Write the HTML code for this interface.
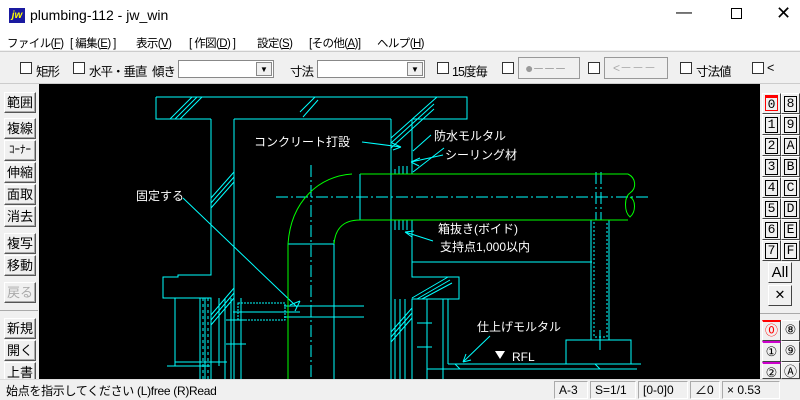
<!DOCTYPE html>
<html><head><meta charset="utf-8"><style>
*{margin:0;padding:0;box-sizing:border-box}
body{width:800px;height:400px;overflow:hidden;background:#f0f0f0;font-family:"Liberation Sans","Noto Sans CJK JP",sans-serif;font-size:12px;color:#000;position:relative}
.a{position:absolute;white-space:nowrap}
.m{font-size:11.5px;letter-spacing:-0.6px}
.t{font-size:12.5px;letter-spacing:-1px}
.cb{position:absolute;width:12px;height:12px;border:1px solid #333;background:#fff}
.btn{position:absolute;left:4px;width:32px;height:21px;background:#f0f0f0;border:1px solid;border-color:#fff #555 #555 #fff;box-shadow:inset -1px -1px #aaa;font-size:13px;text-align:center;line-height:19px}
.lb{position:absolute;width:19px;height:21px;background:#f0f0f0;border:1px solid;border-color:#fff #444 #444 #fff;font-family:"Liberation Mono",monospace;font-size:13px;text-align:center;line-height:19px}
.lb i{display:inline-block;border:1px solid #000;width:13px;height:16px;line-height:14px;font-style:normal;margin-top:1px}
.sb{position:absolute;top:381px;height:18px;border:1px solid;border-color:#aaa #fff #fff #aaa;line-height:16px;padding-left:4px;font-size:12px}
</style></head><body>
<div class="a" style="left:0;top:0;width:800px;height:31px;background:#fff"></div>
<div class="a" style="left:9px;top:8px;width:16px;height:15px;background:#1a1aa0;color:#ff0;font:bold italic 10px 'Liberation Sans';line-height:15px;text-align:center">jw</div>
<div class="a" style="left:30px;top:7px;font-size:14px">plumbing-112 - jw_win</div>
<div class="a" style="left:676px;top:4px;font-size:16px">&#8212;</div>
<div class="a" style="left:731px;top:8px;width:11px;height:11px;border:1px solid #000"></div>
<div class="a" style="left:776px;top:3px;font-size:18px">&#10005;</div>
<div class="a" style="left:0;top:31px;width:800px;height:19px;background:#fff"></div>
<div class="a m" style="left:7px;top:35px">ファイル(<u>F</u>)</div>
<div class="a m" style="left:70px;top:35px">[ 編集(<u>E</u>) ]</div>
<div class="a m" style="left:136px;top:35px">表示(<u>V</u>)</div>
<div class="a m" style="left:189px;top:35px">[ 作図(<u>D</u>) ]</div>
<div class="a m" style="left:257px;top:35px">設定(<u>S</u>)</div>
<div class="a m" style="left:309px;top:35px">[その他(<u>A</u>)]</div>
<div class="a m" style="left:377px;top:35px">ヘルプ(<u>H</u>)</div>
<div class="a" style="left:0;top:51px;width:800px;height:1px;background:#ccc"></div>
<div class="cb" style="left:20px;top:62px"></div><div class="a t" style="left:36px;top:61px">矩形</div>
<div class="cb" style="left:73px;top:62px"></div><div class="a t" style="left:89px;top:61px">水平・垂直</div>
<div class="a t" style="left:152px;top:61px">傾き</div>
<div class="a" style="left:178px;top:60px;width:96px;height:18px;background:#fff;border:1px solid #888"></div>
<div class="a" style="left:256px;top:62px;width:16px;height:14px;border:1px solid #888;background:#f0f0f0;font-size:8px;text-align:center;line-height:13px">▼</div>
<div class="a t" style="left:290px;top:61px">寸法</div>
<div class="a" style="left:317px;top:60px;width:108px;height:18px;background:#fff;border:1px solid #888"></div>
<div class="a" style="left:407px;top:62px;width:16px;height:14px;border:1px solid #888;background:#f0f0f0;font-size:8px;text-align:center;line-height:13px">▼</div>
<div class="cb" style="left:437px;top:62px"></div><div class="a t" style="left:452px;top:61px">15度毎</div>
<div class="cb" style="left:502px;top:62px"></div>
<div class="a" style="left:518px;top:57px;width:62px;height:22px;border:1px solid #999;color:#999;font-size:12px;line-height:20px;padding-left:6px;letter-spacing:-1px"><span style="font-size:14px">●</span>－－－</div>
<div class="cb" style="left:588px;top:62px"></div>
<div class="a" style="left:604px;top:57px;width:64px;height:22px;border:1px solid #999;color:#aaa;font-size:12px;line-height:20px;padding-left:8px">&lt;－－－</div>
<div class="cb" style="left:680px;top:62px"></div><div class="a t" style="left:696px;top:61px">寸法値</div>
<div class="cb" style="left:752px;top:62px"></div><div class="a t" style="left:767px;top:61px">&lt;</div>
<div class="a" style="left:0;top:83px;width:800px;height:1px;background:#ccc"></div>

<div class="btn" style="top:92px">範囲</div>
<div class="btn" style="top:118px">複線</div>
<div class="btn" style="top:140px;font-size:11px">ｺｰﾅｰ</div>
<div class="btn" style="top:162px">伸縮</div>
<div class="btn" style="top:184px">面取</div>
<div class="btn" style="top:206px">消去</div>
<div class="btn" style="top:233px">複写</div>
<div class="btn" style="top:255px">移動</div>
<div class="btn" style="top:282px;color:#aaa">戻る</div>
<div class="a" style="left:0;top:310px;width:38px;height:1px;background:#aaa"></div>
<div class="btn" style="top:318px">新規</div>
<div class="btn" style="top:340px">開く</div>
<div class="btn" style="top:362px">上書</div>

<svg class="a" style="left:39px;top:84px" width="721" height="295" viewBox="39 84 721 295">
<rect x="39" y="84" width="721" height="295" fill="#000"/>
<g stroke="#0ff" stroke-width="1" fill="none" shape-rendering="crispEdges">
<path d="M156 97H467V119H412M391 119H234M211 119H156V97"/>
<path d="M211 119V275H178V277H163V298H211V379M234 119V379"/>
<path d="M391 119V379M412 119V174M412 220V277H459V299H412V379M427 299V379M443 299V379M448 299V364"/>
<path d="M412 262H592M591 220V340M609 220V340M566 340H631V364H566ZM448 364H641M427 369H637M600 330V350"/>
<path d="M360 174V220M288 244H334M334 240V379M288 244V379"/>
<path d="M175 298V366M175 298h10M175 362h52M167 366h43M219 298V366M225 298V379M226 320h20M226 344h20M241 298V379M231 298V379"/>
<path d="M395 299V379M400 299V379M405 299V379M417 323h15M417 347h15"/>
<path d="M200 298V379M205 298V379"/>
<path d="M238 303H285V320H238Z" stroke-dasharray="2 1"/>
<path d="M233 312H300M284 306h80M284 317h80" />
<path d="M594 222V337H607V222" stroke-dasharray="2 2"/>
<path d="M311 165V379M276 197H651M596 172V220M601 172V220" stroke-dasharray="12 3 2 3"/>
</g>
<g stroke="#0ff" stroke-width="1" fill="none">
<path d="M170 119L192 97M175 119L197 97M180 119L202 97M211 198L234 172M211 203L234 177M211 208L234 182M211 315L234 288M211 320L234 293M211 325L234 298M300 112L315 97M303 117L318 100M391 138L437 97M391 143L434 104M391 148L434 109M412 298L448 277M417 299L450 280M422 299L452 283M391 332L412 308M391 337L412 313M391 342L412 318M455 364L460 369M595 364L600 369"/>
<path d="M203 298V379M208 298V379" stroke-dasharray="3 3"/>
<path d="M395 169V174M399 166V174M403 166V174M407 166V174M395 220V230M399 220V230M403 220V230M407 220V230"/>
<path d="M183 198L297 307M300 301L290 305M300 301L295 311"/>
<path d="M362 142L401 147M401 147L392 143M401 147L393 150"/>
<path d="M413 172L444 148M413 151L431 135M411 162L443 155M411 162L420 158M411 162L419 166"/>
<path d="M405 232L433 241M405 232L414 231M405 232L412 237"/>
<path d="M463 362L490 336M463 362L466 354M463 362L471 360"/>
</g>
<g stroke="#0f0" stroke-width="1" fill="none">
<path d="M360 174H628M360 220H628M352 174C320 176 291 200 288 244V379M360 220C340 220 335 232 334 244"/>
<path d="M628 174C636 178 637 188 630 193C624 197 624 212 630 217C636 212 636 200 630 197"/>
</g>
<path d="M495 351h10l-5 8z" fill="#fff"/>
<g fill="#fff" font-size="12" font-family="Liberation Sans,Noto Sans CJK JP,sans-serif">
<text x="254" y="146">コンクリート打設</text>
<text x="434" y="140">防水モルタル</text>
<text x="445" y="159">シーリング材</text>
<text x="136" y="200">固定する</text>
<text x="438" y="233">箱抜き(ボイド)</text>
<text x="440" y="251">支持点1,000以内</text>
<text x="477" y="331">仕上げモルタル</text>
<text x="512" y="361">RFL</text>
</g>
</svg>

<div class="a" style="left:760px;top:84px;width:40px;height:295px;background:#f0f0f0"></div>
<div class="lb" style="left:762px;top:93px"><i style="border-color:#f00;border-top:3px solid #f00">0</i></div><div class="lb" style="left:781px;top:93px"><i>8</i></div>
<div class="lb" style="left:762px;top:114px"><i>1</i></div><div class="lb" style="left:781px;top:114px"><i>9</i></div>
<div class="lb" style="left:762px;top:135px"><i>2</i></div><div class="lb" style="left:781px;top:135px"><i>A</i></div>
<div class="lb" style="left:762px;top:156px"><i>3</i></div><div class="lb" style="left:781px;top:156px"><i>B</i></div>
<div class="lb" style="left:762px;top:177px"><i>4</i></div><div class="lb" style="left:781px;top:177px"><i>C</i></div>
<div class="lb" style="left:762px;top:198px"><i>5</i></div><div class="lb" style="left:781px;top:198px"><i>D</i></div>
<div class="lb" style="left:762px;top:219px"><i>6</i></div><div class="lb" style="left:781px;top:219px"><i>E</i></div>
<div class="lb" style="left:762px;top:240px"><i>7</i></div><div class="lb" style="left:781px;top:240px"><i>F</i></div>
<div class="lb" style="left:768px;top:262px;width:24px;font-family:'Liberation Sans';font-size:15px">All</div>
<div class="lb" style="left:768px;top:285px;width:24px;font-size:16px">&#10005;</div>
<div class="a" style="left:760px;top:313px;width:40px;height:1px;background:#aaa"></div>
<div class="lb" style="left:762px;top:320px;color:#f00;border-top:2px solid #f00">⓪</div><div class="lb" style="left:781px;top:320px">⑧</div>
<div class="lb" style="left:762px;top:341px;border-top:2px solid #c0c">①</div><div class="lb" style="left:781px;top:341px">⑨</div>
<div class="lb" style="left:762px;top:362px;border-top:2px solid #c0c;height:17px">②</div><div class="lb" style="left:781px;top:362px;height:17px">Ⓐ</div>

<div class="a" style="left:0;top:379px;width:800px;height:21px;background:#f0f0f0;border-top:1px solid #ddd"></div>
<div class="a" style="left:6px;top:382px;font-size:12px;letter-spacing:-0.3px">始点を指示してください (L)free (R)Read</div>
<div class="sb" style="left:554px;width:34px">A-3</div>
<div class="sb" style="left:590px;width:46px">S=1/1</div>
<div class="sb" style="left:638px;width:50px">[0-0]0</div>
<div class="sb" style="left:690px;width:30px">∠0</div>
<div class="sb" style="left:722px;width:58px">× 0.53</div>
</body></html>
